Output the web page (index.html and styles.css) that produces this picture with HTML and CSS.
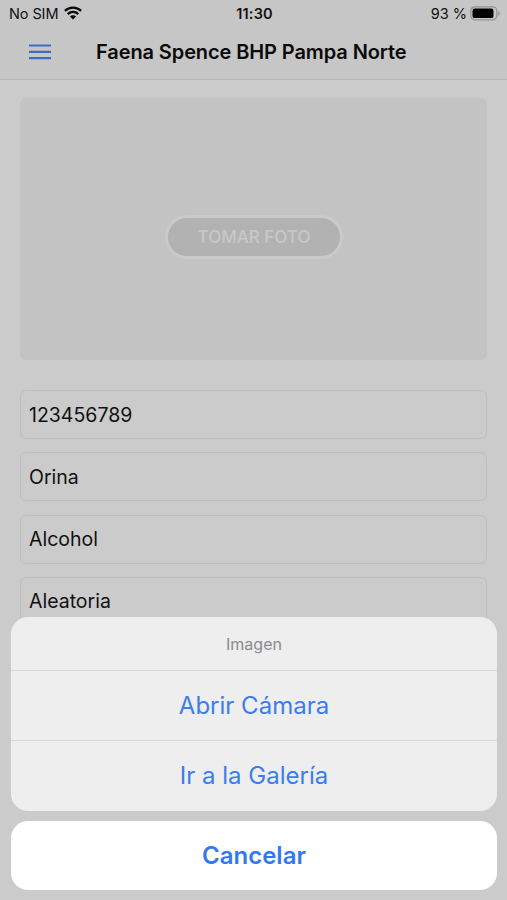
FILE: index.html
```html
<!DOCTYPE html>
<html lang="es">
<head>
<meta charset="utf-8">
<title>Faena Spence BHP Pampa Norte</title>
<link rel="stylesheet" href="styles.css">
</head>
<body>
<div class="screen">
  <header class="header">
    <div class="status">
      <div class="carrier"><span class="sim">No SIM</span>
        <svg class="wifi" width="18" height="14" viewBox="0 0 18 14" fill="none" stroke="#080808" stroke-width="2.3"><path d="M.9 4.9a11.6 11.6 0 0 1 16.2 0"/><path d="M3.8 8.1a7.4 7.4 0 0 1 10.4 0"/><path d="M9 13.6 5.9 10.5a4.4 4.4 0 0 1 6.2 0Z" fill="#080808" stroke="none"/></svg>
      </div>
      <span class="clock">11:30</span>
      <div class="power"><span class="percent">93 %</span>
        <svg class="battery" width="31" height="15" viewBox="0 0 31 15"><rect x=".8" y=".8" width="26" height="13" rx="4" fill="none" stroke="#929292" stroke-width="1.2"/><rect x="2.5" y="2.5" width="21" height="9.6" rx="2.2" fill="#000"/><path d="M28.4 5v5c2-.8 2-4.200 0-5Z" fill="#929292"/></svg>
      </div>
    </div>
    <div class="toolbar">
      <button class="menu" aria-label="Menú"><svg width="24" height="18" viewBox="0 0 24 18" stroke="#3b6dc4" stroke-width="2.2"><path d="M1 2.500h22M1 8.900h22M1 15.200h22"/></svg></button>
      <h1 class="title">Faena Spence BHP Pampa Norte</h1>
    </div>
  </header>
  <main class="content">
    <div class="photo"><button class="take"><span>TOMAR FOTO</span></button></div>
    <div class="fields">
      <div class="field"><span class="number">123456789</span></div>
      <div class="field"><span class="orina">Orina</span></div>
      <div class="field"><span class="alcohol">Alcohol</span></div>
      <div class="field"><span class="aleatoria">Aleatoria</span></div>
    </div>
  </main>
  <div class="sheet">
    <div class="group">
      <div class="caption"><span>Imagen</span></div>
      <button class="option"><span class="camera">Abrir Cámara</span></button>
      <button class="option"><span class="gallery">Ir a la Galería</span></button>
    </div>
    <button class="cancel"><span>Cancelar</span></button>
  </div>
</div>
</body>
</html>
```
FILE: styles.css
```css
* { box-sizing: border-box; }
body { margin: 0; font-family: Inter, "Liberation Sans", sans-serif; }
button { border: 0; margin: 0; padding: 0; background: none; font-family: inherit; }
.screen { position: relative; width: 507px; height: 900px; overflow: hidden; background: #cbcbcb; color: #111; }
.header { height: 80px; background: #c6c6c6; border-bottom: 1px solid #b6b6b6; }
.status { height: 28px; padding: 0 7px 0 9px; display: grid; grid-template-columns: 1fr auto 1fr; align-items: center; font-size: 14.5px; line-height: 18px; }
.carrier { display: flex; align-items: center; gap: 6px; }
.wifi { margin-top: -2px; }
.sim { letter-spacing: -.1px; }
.clock { font-weight: 600; letter-spacing: .2px; }
.power { display: flex; align-items: center; justify-content: flex-end; gap: 3px; }
.battery { margin-right: -1px; margin-top: -1px; }
.toolbar { height: 51px; display: flex; align-items: center; padding: 0 0 3px 28px; }
.menu { width: 24px; height: 18px; display: block; }
.menu svg { display: block; }
.title { margin: 0 0 0 44px; font-size: 20px; line-height: 26px; font-weight: 600; color: #0a0a0a; white-space: nowrap; letter-spacing: -.1px; }
.content { padding: 18px 20px 0; }
.photo { height: 262px; border-radius: 6px; background: #c3c3c3; display: flex; align-items: center; justify-content: center; }
.take { width: 178px; height: 44px; margin: 15px 0 0 1px; border-radius: 22px; border: 3px solid #cacaca; background: #b2b2b2; color: #c8c8c8; font-size: 17px; font-weight: 500; }
.fields { margin-top: 30px; display: grid; gap: 13.3px; }
.field { height: 49px; border: 1px solid #bfbfbf; border-radius: 6px; padding-left: 8px; display: flex; align-items: center; font-size: 19.5px; }
.sheet { position: absolute; left: 11px; right: 10px; top: 617px; }
.group { height: 194px; border-radius: 17px; overflow: hidden; background: #eee; }
.caption { height: 53px; padding-top: 1px; display: flex; align-items: center; justify-content: center; font-size: 16px; color: #8b8b8b; }
.option { width: 100%; height: 70px; display: block; border-top: 1px solid #d8d8d9; color: #3b7de9; font-size: 24px; }
.cancel { width: 100%; height: 69px; margin-top: 10px; display: block; border-radius: 17px; background: #fff; color: #3478f0; font-size: 24px; font-weight: 600; }
```
